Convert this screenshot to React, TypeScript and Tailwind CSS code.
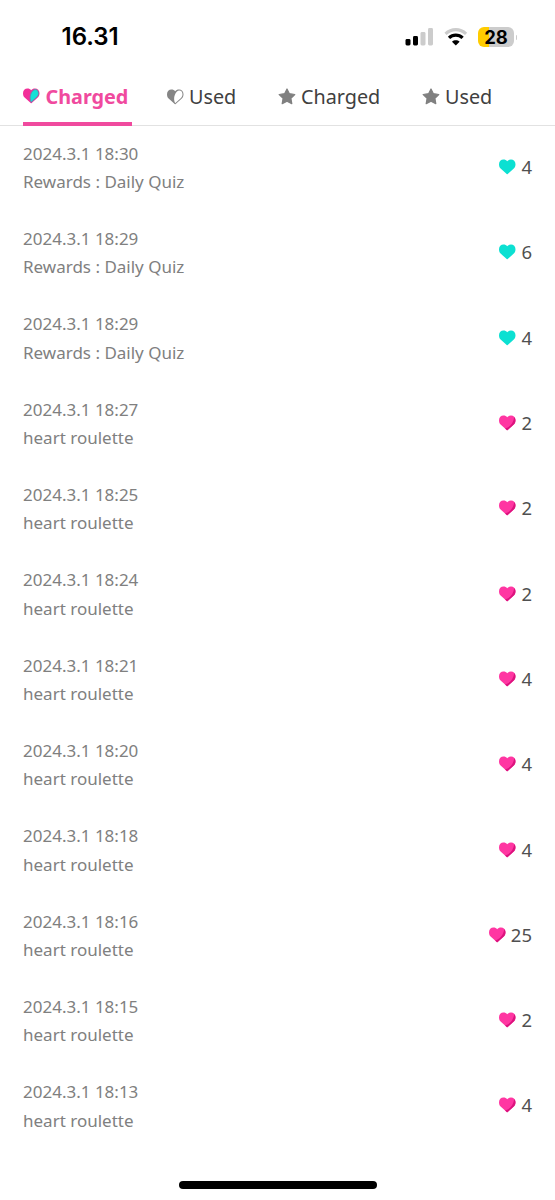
interface Entry {
  date: string;
  label: string;
  amount: number;
  kind: 'mint' | 'pink';
}

const entries: Entry[] = [
  { date: '2024.3.1 18:30', label: 'Rewards : Daily Quiz', amount: 4, kind: 'mint' },
  { date: '2024.3.1 18:29', label: 'Rewards : Daily Quiz', amount: 6, kind: 'mint' },
  { date: '2024.3.1 18:29', label: 'Rewards : Daily Quiz', amount: 4, kind: 'mint' },
  { date: '2024.3.1 18:27', label: 'heart roulette', amount: 2, kind: 'pink' },
  { date: '2024.3.1 18:25', label: 'heart roulette', amount: 2, kind: 'pink' },
  { date: '2024.3.1 18:24', label: 'heart roulette', amount: 2, kind: 'pink' },
  { date: '2024.3.1 18:21', label: 'heart roulette', amount: 4, kind: 'pink' },
  { date: '2024.3.1 18:20', label: 'heart roulette', amount: 4, kind: 'pink' },
  { date: '2024.3.1 18:18', label: 'heart roulette', amount: 4, kind: 'pink' },
  { date: '2024.3.1 18:16', label: 'heart roulette', amount: 25, kind: 'pink' },
  { date: '2024.3.1 18:15', label: 'heart roulette', amount: 2, kind: 'pink' },
  { date: '2024.3.1 18:13', label: 'heart roulette', amount: 4, kind: 'pink' },
];

const HEART =
  'M8 15.3L1.6 9.6C0.5 8.5 0 7.1 0 5.3C0 2.4 2 0.6 4.4 0.6C6 0.6 7.4 1.2 8.2 2.3C9 1.2 10.3 0.6 12 0.6C14.5 0.6 16.5 2.4 16.5 5.3C16.5 7.1 15.9 8.5 14.8 9.6L8.4 15.3Z';
const HEART_HALF =
  'M8.1 14.2C7 12 6.7 8.6 7.8 6C8.8 3.5 10.4 1.6 12.4 1.6C14.3 1.6 15.5 3.2 15.5 5.3C15.5 6.8 15 8 14 8.9Z';

function AmountHeart({ kind }: { kind: Entry['kind'] }) {
  return (
    <svg width="17" height="16" viewBox="0 0 17 16">
      <path d={HEART} fill={kind === 'mint' ? '#0ce0d2' : '#ff36a2'} />
      {kind === 'pink' && (
        <path
          d="M15.2 2C16 2.8 16.5 3.9 16.5 5.3C16.5 7.1 15.9 8.5 14.8 9.6L8.4 15.3H8L6 13.5C10.6 12.4 14.6 8 15.2 2Z"
          fill="#dc147e"
        />
      )}
    </svg>
  );
}

function SplitHeart({ active }: { active?: boolean }) {
  return (
    <svg width="17" height="16" viewBox="0 0 17 16">
      <path d={HEART} fill={active ? '#f22f99' : '#858585'} />
      <path d={HEART_HALF} fill={active ? '#12e2d7' : '#ffffff'} />
      {active && <path d={HEART_HALF} fill="none" stroke="#5f8fae" strokeWidth="0.9" />}
    </svg>
  );
}

function Star() {
  return (
    <svg width="18" height="17" viewBox="0 0 18 17" className="-mt-px">
      <path
        d="M9 1L11.4 5.7L16.8 6.5L12.9 10.3L13.8 15.7L9 13.2L4.2 15.7L5.1 10.3L1.2 6.5L6.6 5.7Z"
        fill="#808080"
        stroke="#808080"
        strokeWidth="1.2"
        strokeLinejoin="round"
      />
    </svg>
  );
}

function StatusBar() {
  return (
    <div className="flex h-[69px] shrink-0 items-start justify-between pl-[61.5px] pr-[38px] pt-[22px]">
      <span className="font-['Inter'] text-[24px] leading-[30px] font-semibold text-black">16.31</span>
      <div className="flex h-[30px] items-center">
        <svg width="28" height="18" viewBox="0 0 28 18" className="mr-[11px]">
          <rect x="0.5" y="11" width="5" height="6.5" rx="1.4" fill="#000" />
          <rect x="8" y="8" width="5" height="9.5" rx="1.4" fill="#000" />
          <rect x="15.5" y="4" width="5" height="13.5" rx="1.4" fill="#cccccc" />
          <rect x="23" y="0" width="5" height="17.5" rx="1.4" fill="#cccccc" />
        </svg>
        <svg width="24" height="18" viewBox="0 0 24 18" className="mr-[10px]">
          <path d="M1.5 5.8C7.5 0.2 16.1 0.2 22.1 5.8" fill="none" stroke="#cccccc" strokeWidth="3.1" />
          <path d="M5 9.9C8.9 6.2 14.7 6.2 18.6 9.9" fill="none" stroke="#000" strokeWidth="3.3" />
          <path d="M11.8 17.5L8 13.7C10.1 11.8 13.5 11.8 15.6 13.7Z" fill="#000" />
        </svg>
        <div className="flex h-[20px] w-[36px] items-center justify-center rounded-[6px] bg-[linear-gradient(to_right,#ffcc00_11px,#cccccc_11px)] font-['Inter'] text-[18.5px] leading-[20px] font-bold text-black">
          28
        </div>
        <span className="ml-[1.5px] h-[5px] w-[1.5px] rounded-r-full bg-[#cccccc]" />
      </div>
    </div>
  );
}

function Tabs() {
  return (
    <div className="flex h-[57px] shrink-0 border-b border-[#e2e2e2] pl-[23px] text-[19.8px] leading-[56px] text-[#404040]">
      <div className="-mb-px flex w-[109px] items-center gap-[5.5px] border-b-[4px] border-[#f04a9e] font-bold text-[#f04a9e]">
        <SplitHeart active />
        <span className="-mb-[3px]">Charged</span>
      </div>
      <div className="ml-[35px] flex w-[111px] items-center gap-[5px]">
        <SplitHeart />
        <span>Used</span>
      </div>
      <div className="flex w-[144px] items-center gap-[5px]">
        <Star />
        <span>Charged</span>
      </div>
      <div className="flex items-center gap-[5px]">
        <Star />
        <span>Used</span>
      </div>
    </div>
  );
}

export default function App() {
  return (
    <div className="flex h-[1200px] w-[555px] flex-col overflow-hidden bg-white font-['Noto_Sans',sans-serif]">
      <StatusBar />
      <Tabs />
      <ul className="-mt-[0.6px] h-[1024px] shrink-0">
        {entries.map((entry, i) => (
          <li key={i} className="flex h-[85.33px] items-center justify-between pl-[23px] pr-[23px]">
            <div className="text-[17px] leading-[28.5px] text-[#808080]">
              <p>{entry.date}</p>
              <p>{entry.label}</p>
            </div>
            <div className="mb-[2.4px] flex items-center gap-[5px] text-[18.5px] leading-[28px] text-[#505050]">
              <AmountHeart kind={entry.kind} />
              <span>{entry.amount}</span>
            </div>
          </li>
        ))}
      </ul>
      <div className="mx-auto mt-[31.6px] h-[7.5px] w-[198px] shrink-0 rounded-full bg-black" />
    </div>
  );
}
